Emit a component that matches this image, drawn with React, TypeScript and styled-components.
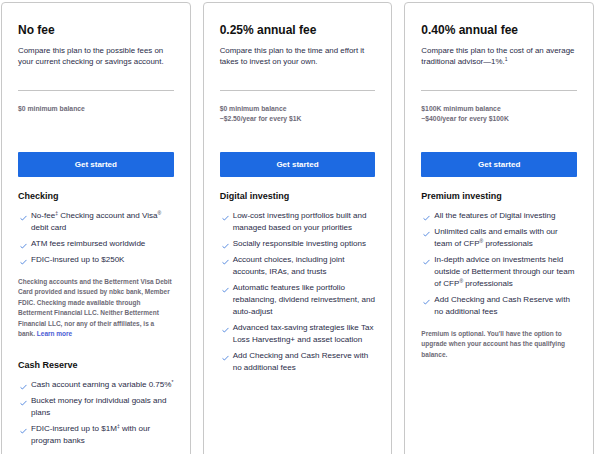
import React from "react";
import styled, { createGlobalStyle } from "styled-components";

const GlobalStyle = createGlobalStyle`
  body {
    margin: 0;
    background: #fff;
    font-family: "Liberation Sans", Arial, sans-serif;
    color: #2f3150;
  }
`;

const Plans = styled.div`
  display: grid;
  grid-template-columns: repeat(3, 1fr);
  gap: 12px;
  padding: 2px 2px 0 1px;
`;

const Card = styled.div`
  border: 1px solid #c8c8c8;
  border-radius: 4px;
  padding: 20px 16px 24px;
`;

const Title = styled.h2`
  margin: 0;
  font-size: 12px;
  line-height: 15px;
  font-weight: 700;
  color: #111;
`;

const Desc = styled.p`
  margin: 8px 0 0;
  font-size: 7.9px;
  line-height: 10.5px;
  color: #2a2c48;
`;

const Sup = styled.sup`
  font-size: 5px;
  line-height: 0;
  vertical-align: 3px;
`;

const Divider = styled.hr`
  margin: 23px 0 0;
  border: 0;
  border-top: 1px solid #c4c4c4;
`;

const Balance = styled.div`
  margin-top: 13px;
  min-height: 20px;
  font-size: 6.8px;
  line-height: 10px;
  font-weight: 700;
  color: #6e6a78;
`;

const Button = styled.button`
  display: block;
  width: 100%;
  height: 25px;
  margin-top: 28px;
  border: 0;
  border-radius: 1px;
  background: #1d6ae2;
  color: #fff;
  font-family: inherit;
  font-size: 8px;
  font-weight: 700;
  cursor: pointer;
`;

const SectionBlock = styled.div<{ $first: boolean }>`
  margin-top: ${(p) => (p.$first ? "13px" : "20px")};
`;

const Heading = styled.h3`
  margin: 0;
  font-size: 9px;
  line-height: 12px;
  font-weight: 700;
  color: #111;
`;

const List = styled.ul`
  list-style: none;
  margin: 8px 0 0;
  padding: 0;
  display: flex;
  flex-direction: column;
  gap: 4px;
`;

const Item = styled.li`
  display: flex;
  gap: 4px;
  font-size: 8.05px;
  line-height: 12px;
  color: #2a2c48;
`;

const Check = styled.svg`
  flex: none;
  width: 7px;
  height: 6px;
  margin: 5px 0 0 2px;
  fill: none;
  stroke: #2f6fd8;
  stroke-width: 0.9;
`;

const Note = styled.p`
  margin: 11px 0 0;
  font-size: 6.5px;
  line-height: 10.4px;
  font-weight: 700;
  color: #6d6a75;
`;

const NoteLink = styled.a`
  color: #4a5bd4;
  text-decoration: none;
`;

type Section = {
  heading: string;
  items: React.ReactNode[];
  note?: React.ReactNode;
};

type Plan = {
  title: string;
  desc: React.ReactNode;
  balance: string[];
  sections: Section[];
};

const plans: Plan[] = [
  {
    title: "No fee",
    desc: "Compare this plan to the possible fees on your current checking or savings account.",
    balance: ["$0 minimum balance"],
    sections: [
      {
        heading: "Checking",
        items: [
          <>
            No-fee<Sup>‡</Sup> Checking account and Visa<Sup>®</Sup> debit card
          </>,
          "ATM fees reimbursed worldwide",
          "FDIC-insured up to $250K",
        ],
        note: (
          <>
            Checking accounts and the Betterment Visa Debit
            <br />
            Card provided and issued by nbkc bank, Member
            <br />
            FDIC. Checking made available through
            <br />
            Betterment Financial LLC. Neither Betterment
            <br />
            Financial LLC, nor any of their affiliates, is a
            <br />
            bank. <NoteLink>Learn more</NoteLink>
          </>
        ),
      },
      {
        heading: "Cash Reserve",
        items: [
          <>
            Cash account earning a variable 0.75%<Sup>*</Sup>
          </>,
          "Bucket money for individual goals and plans",
          <>
            FDIC-insured up to $1M<Sup>‡</Sup> with our program banks
          </>,
        ],
      },
    ],
  },
  {
    title: "0.25% annual fee",
    desc: "Compare this plan to the time and effort it takes to invest on your own.",
    balance: ["$0 minimum balance", "~$2.50/year for every $1K"],
    sections: [
      {
        heading: "Digital investing",
        items: [
          "Low-cost investing portfolios built and managed based on your priorities",
          "Socially responsible investing options",
          "Account choices, including joint accounts, IRAs, and trusts",
          "Automatic features like portfolio rebalancing, dividend reinvestment, and auto-adjust",
          "Advanced tax-saving strategies like Tax Loss Harvesting+ and asset location",
          "Add Checking and Cash Reserve with no additional fees",
        ],
      },
    ],
  },
  {
    title: "0.40% annual fee",
    desc: (
      <>
        Compare this plan to the cost of an average traditional advisor—1%.<Sup>1</Sup>
      </>
    ),
    balance: ["$100K minimum balance", "~$400/year for every $100K"],
    sections: [
      {
        heading: "Premium investing",
        items: [
          "All the features of Digital investing",
          <>
            Unlimited calls and emails with our team of CFP<Sup>®</Sup> professionals
          </>,
          <>
            In-depth advice on investments held outside of Betterment through our team of CFP<Sup>®</Sup>{" "}
            professionals
          </>,
          "Add Checking and Cash Reserve with no additional fees",
        ],
        note: "Premium is optional. You'll have the option to upgrade when your account has the qualifying balance.",
      },
    ],
  },
];

export default function App() {
  return (
    <>
      <GlobalStyle />
      <Plans>
        {plans.map((p) => (
          <Card key={p.title}>
            <Title>{p.title}</Title>
            <Desc>{p.desc}</Desc>
            <Divider />
            <Balance>
              {p.balance.map((b) => (
                <div key={b}>{b}</div>
              ))}
            </Balance>
            <Button>Get started</Button>
            {p.sections.map((s, si) => (
              <SectionBlock key={s.heading} $first={si === 0}>
                <Heading>{s.heading}</Heading>
                <List>
                  {s.items.map((item, i) => (
                    <Item key={i}>
                      <Check viewBox="0 0 8 6">
                        <polyline points="0.6,3.4 2.8,5.3 7.4,0.6" />
                      </Check>
                      <span>{item}</span>
                    </Item>
                  ))}
                </List>
                {s.note && <Note>{s.note}</Note>}
              </SectionBlock>
            ))}
          </Card>
        ))}
      </Plans>
    </>
  );
}
